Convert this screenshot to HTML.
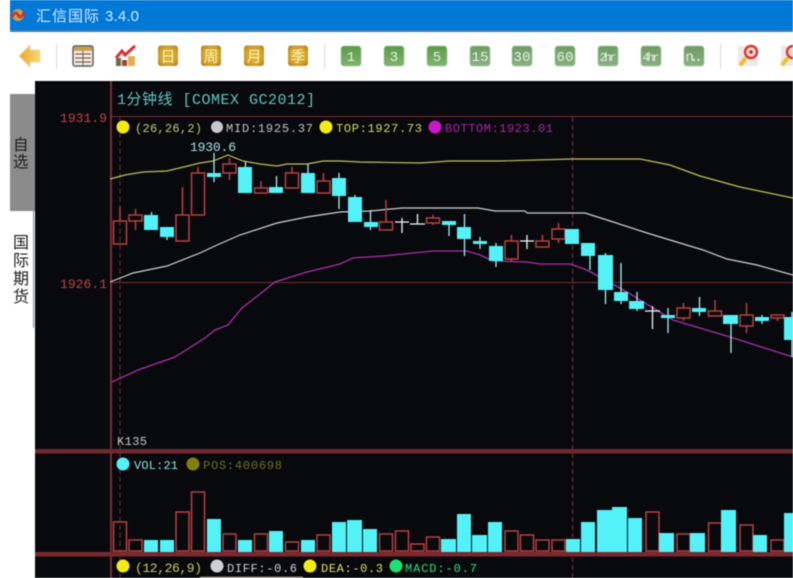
<!DOCTYPE html>
<html>
<head>
<meta charset="utf-8">
<style>
html,body{margin:0;padding:0;width:793px;height:578px;overflow:hidden;background:#fff}
svg{position:absolute;left:0;top:0;filter:blur(.4px)}
text{font-family:"Liberation Mono","Noto Sans CJK SC",monospace;font-size:12px}
.cjk{font-family:"Liberation Sans","Noto Sans CJK SC",sans-serif}
</style>
</head>
<body>
<svg width="793" height="578" viewBox="0 0 793 578" xmlns="http://www.w3.org/2000/svg">
<defs>
<radialGradient id="gold" cx=".5" cy=".5" r=".7"><stop offset="0" stop-color="#e6bc38"/><stop offset=".65" stop-color="#cfa02a"/><stop offset="1" stop-color="#a0741e"/></radialGradient>
<linearGradient id="grn" x1="0" y1="0" x2="0" y2="1"><stop offset="0" stop-color="#5a9a4a"/><stop offset="1" stop-color="#80b470"/></linearGradient>
<linearGradient id="grn2" x1="0" y1="0" x2="0" y2="1"><stop offset="0" stop-color="#6f9c66"/><stop offset="1" stop-color="#8ab084"/></linearGradient>
<linearGradient id="arrow" x1="0" y1="0" x2="1" y2="0"><stop offset="0" stop-color="#e8a828"/><stop offset="1" stop-color="#f6d878"/></linearGradient>
</defs>

<!-- title bar -->
<rect x="10" y="0" width="783" height="31" fill="#0078d7"/>
<rect x="10" y="30" width="783" height="2" fill="#3f7fb2"/>
<circle cx="18" cy="15" r="6" fill="#c9a050"/>
<path d="M12 17 Q15 10 18 15 T24 12" stroke="#c83a30" stroke-width="3" fill="none"/>
<text class="cjk" x="36" y="21" style="font-size:15px" fill="#d6e9f8" textLength="63">汇信国际</text>
<text class="cjk" x="105" y="21" style="font-size:15px;font-family:'Liberation Sans',sans-serif" fill="#d6e9f8" textLength="34">3.4.0</text>

<!-- toolbar -->
<path d="M19 56 L30 45 V50 H40 V62 H30 V67 Z" fill="url(#arrow)" stroke="#ecd8a0" stroke-width="1"/>
<rect x="56" y="44" width="1" height="25" fill="#d8d8d8"/>
<rect x="73" y="46" width="20" height="20" rx="2" fill="#f4f0e4" stroke="#555" stroke-width="1.4"/>
<rect x="74" y="47" width="18" height="4" fill="#c8a050"/>
<path d="M75 54H91M75 58H91M75 62H91" stroke="#8a5a50" stroke-width="1.3"/>
<path d="M83 51V65" stroke="#666" stroke-width="1"/>
<rect x="116" y="58" width="5" height="8" fill="#607048"/>
<rect x="122" y="60" width="5" height="6" fill="#a04030"/>
<rect x="128" y="56" width="7" height="10" fill="#e0b050"/>
<path d="M116 58 L122 51 L125 55 L135 46" stroke="#d83030" stroke-width="3" fill="none"/>

<g fill="url(#gold)">
<rect x="158" y="45.500" width="20" height="20.500" rx="3"/>
<rect x="201" y="45.500" width="20" height="20.500" rx="3"/>
<rect x="244" y="45.500" width="20" height="20.500" rx="3"/>
<rect x="288" y="45.500" width="20" height="20.500" rx="3"/>
</g>
<g fill="#f8eebc" text-anchor="middle">
<text class="cjk" x="168" y="61.500" style="font-size:15px">日</text>
<text class="cjk" x="211" y="61.500" style="font-size:15px">周</text>
<text class="cjk" x="254" y="61.500" style="font-size:15px">月</text>
<text class="cjk" x="298" y="61.500" style="font-size:15px">季</text>
</g>
<rect x="324" y="44" width="1" height="25" fill="#d8d8d8"/>

<g stroke="#a8c8a0" stroke-width=".8">
<rect x="341" y="46" width="20" height="20" rx="3" fill="url(#grn)"/>
<rect x="384" y="46" width="20" height="20" rx="3" fill="url(#grn)"/>
<rect x="427" y="46" width="20" height="20" rx="3" fill="url(#grn)"/>
<rect x="470" y="46" width="20" height="20" rx="3" fill="url(#grn2)"/>
<rect x="512" y="46" width="20" height="20" rx="3" fill="url(#grn2)"/>
<rect x="555" y="46" width="20" height="20" rx="3" fill="url(#grn2)"/>
<rect x="598" y="46" width="20" height="20" rx="3" fill="url(#grn2)"/>
<rect x="641" y="46" width="20" height="20" rx="3" fill="url(#grn2)"/>
<rect x="684" y="46" width="20" height="20" rx="3" fill="url(#grn2)"/>
</g>
<g fill="#e4f2dc" text-anchor="middle">
<text x="351" y="61" style="font-size:14px">1</text>
<text x="394" y="61" style="font-size:14px">3</text>
<text x="437" y="61" style="font-size:14px">5</text>
<text x="480" y="61" style="font-size:14px" textLength="17">15</text>
<text x="522" y="61" style="font-size:14px" textLength="17">30</text>
<text x="565" y="61" style="font-size:14px" textLength="17">60</text>
<text x="608" y="61" style="font-size:12px" textLength="17">2hr</text>
<text x="651" y="61" style="font-size:12px" textLength="17">4hr</text>
<text x="694" y="61" style="font-size:14px" textLength="17">n..</text>
</g>
<rect x="720" y="44" width="1" height="25" fill="#d8d8d8"/>
<rect x="738" y="46" width="20" height="20" fill="#eee8e6"/>
<path d="M741 64 L745 59" stroke="#f0c030" stroke-width="4" stroke-linecap="round"/>
<circle cx="751" cy="52" r="6" fill="#f6d8d0" stroke="#d83838" stroke-width="2.400"/>
<circle cx="751" cy="52" r="1.800" fill="#c82828"/>
<rect x="781" y="46" width="12" height="20" fill="#eee8e6"/>
<path d="M783 64 L787 59" stroke="#f0c030" stroke-width="4" stroke-linecap="round"/>
<circle cx="793" cy="52" r="6" fill="#f6d8d0" stroke="#d83838" stroke-width="2.400"/>

<!-- sidebar -->
<rect x="10" y="94" width="25" height="117" fill="#8b8b8b"/>
<rect x="33" y="211" width="1" height="117" fill="#8a8a8a"/>
<g fill="#1c1c1c">
<text class="cjk" x="13" y="150" style="font-size:15.500px">自</text>
<text class="cjk" x="13" y="167" style="font-size:15.500px">选</text>
<text class="cjk" x="13" y="248" style="font-size:16px">国</text>
<text class="cjk" x="13" y="266" style="font-size:16px">际</text>
<text class="cjk" x="13" y="284" style="font-size:16px">期</text>
<text class="cjk" x="13" y="302" style="font-size:16px">货</text>
</g>

<!-- chart background -->
<rect x="35" y="81" width="758" height="497" fill="#08090c"/>
<rect x="110" y="81" width="2" height="497" fill="#782c32"/>
<rect x="110" y="116" width="683" height="1" fill="#782c32"/>
<rect x="110" y="282" width="683" height="1" fill="#782c32"/>
<rect x="35" y="449" width="758" height="4.500" fill="#6e2a30"/>
<rect x="35" y="552" width="758" height="4.500" fill="#7a2830"/>
<path d="M120 117V578M572.500 117V578" stroke="#7a3038" stroke-width="1" stroke-dasharray="5 3"/>
<rect x="200" y="576.500" width="103" height="1.500" fill="#8a8878"/>

<!-- indicator lines -->
<polyline fill="none" stroke="#c0c058" stroke-width="1.200" points="110,179 125,175 143,172 167,171 200,163 213,161 228,155 243,161 260,164 277,166 287,164 307,164 323,161 340,161 360,162 420,163 450,161 500,161 572,159 640,159 670,165 700,176 740,187 793,198"/>
<polyline fill="none" stroke="#d0d0d0" stroke-width="1.200" points="110,282 133,273 167,266 200,253 217,245 240,235 277,223 307,217 340,212 370,211 402,208 478,208 495,211 525,211 527,213 570,213 585,213 607,220 647,233 703,250 727,259 757,265 793,275"/>
<polyline fill="none" stroke="#a830a8" stroke-width="1.300" points="112,382 138,370 175,357 205,338 215,330 228,325 242,308 265,290 275,282 307,272 340,264 353,258 383,256 433,251 467,251 480,255 493,261 527,262 540,264 570,264 587,270 627,292 673,320 730,337 793,357"/>

<!-- red candles -->
<g fill="none" stroke="#b84040" stroke-width="1.500">
<path d="M113.500 221h13v23h-13zM120 207v14"/>
<path d="M129 215h13v6h-13zM135.500 209v6M135.500 221v9"/>
<path d="M176 215h13v26h-13zM182.500 187v28"/>
<path d="M191.500 173h13v42h-13zM198 167v6"/>
<path d="M223 164h13v9h-13zM229.500 158v6M229.500 173v7"/>
<path d="M254.500 188h13v5h-13zM261 181v7"/>
<path d="M285.500 173h13v15h-13zM292 167v6"/>
<path d="M317 181h13v12h-13zM323.500 173v8"/>
<path d="M379.500 222h13v8h-13zM386 200v22"/>
<path d="M426.500 218h13v5h-13zM433 215v3M433 223v2"/>
<path d="M505 241h13v18h-13zM511.500 235v6M511.500 259v3"/>
<path d="M536 241h13v6h-13zM542.500 235v6"/>
<path d="M552 229h13v10h-13zM558.500 223v6M558.500 239v4"/>
<path d="M677 308h13v10h-13zM683.500 303v5M683.500 318v3"/>
<path d="M708.500 311h13v5h-13zM715 300v11"/>
<path d="M740 315h13v11h-13zM746.500 303v12M746.500 326v7"/>
<path d="M771 315h13v3h-13zM777.500 318v3"/>
</g>

<!-- white doji -->
<g fill="none" stroke="#f4f4f4" stroke-width="1.300">
<path d="M395 222h14M402 218v15"/>
<path d="M410 224h15M417.500 214v10"/>
<path d="M520 241h14M527 235v14"/>
<path d="M645 311h15M652.500 306v23"/>
</g>

<!-- cyan wicks -->
<g fill="none" stroke="#a8f0f0" stroke-width="1.300">
<path d="M151.500 212v5M167 237v3M214 153v29M245.500 162v6M276.500 176v12M308 164v10M339 173v36M355 195v4M370.500 210v20M449 225v11M464.500 214v42M480 237v12M496 243v24M574 229v2M590 256v14M605.500 253v51M621 263v41M637 292v19M668 308v25M699.500 297v19M731 324v29M762 315v9M792 312v45"/>
</g>
<!-- cyan bodies -->
<g fill="#52f2f8">
<rect x="144" y="215" width="14" height="15"/>
<rect x="160" y="227" width="14" height="10"/>
<rect x="207" y="173" width="14" height="4"/>
<rect x="238" y="167" width="14" height="26"/>
<rect x="269" y="187" width="14" height="6"/>
<rect x="301" y="173" width="14" height="20"/>
<rect x="332" y="178" width="14" height="18"/>
<rect x="348" y="197" width="14" height="25"/>
<rect x="364" y="222" width="14" height="5"/>
<rect x="442" y="221" width="14" height="4"/>
<rect x="457" y="227" width="14" height="12"/>
<rect x="473" y="241" width="14" height="3"/>
<rect x="489" y="246" width="14" height="15"/>
<rect x="565" y="229" width="14" height="15"/>
<rect x="581" y="243" width="14" height="13"/>
<rect x="598" y="255" width="15" height="35"/>
<rect x="614" y="292" width="14" height="9"/>
<rect x="629" y="301" width="15" height="8"/>
<rect x="661" y="315" width="14" height="3"/>
<rect x="692" y="308" width="14" height="4"/>
<rect x="723" y="315" width="15" height="9"/>
<rect x="755" y="317" width="14" height="4"/>
<rect x="784" y="317" width="9" height="23"/>
</g>

<!-- volume: red -->
<g fill="none" stroke="#b84040" stroke-width="1.500">
<path d="M113.500 522h13v29h-13z"/>
<path d="M129 540h13v11h-13z"/>
<path d="M176 512h13v39h-13z"/>
<path d="M191.500 492h13v59h-13z"/>
<path d="M223 534h13v17h-13z"/>
<path d="M254.500 534h13v17h-13z"/>
<path d="M285.500 542h13v9h-13z"/>
<path d="M317 535h13v16h-13z"/>
<path d="M379.500 534h13v17h-13z"/>
<path d="M395.500 531h13v20h-13z"/>
<path d="M411 544h13v7h-13z"/>
<path d="M426.500 537h13v14h-13z"/>
<path d="M505 531h13v20h-13z"/>
<path d="M520.500 535h13v16h-13z"/>
<path d="M536 540h13v11h-13z"/>
<path d="M552 540h13v11h-13z"/>
<path d="M646 512h13v39h-13z"/>
<path d="M677 534h13v17h-13z"/>
<path d="M708.500 523h13v28h-13z"/>
<path d="M740 525h13v26h-13z"/>
<path d="M771 540h13v11h-13z"/>
</g>
<!-- volume: cyan -->
<g fill="#52f2f8">
<rect x="144" y="540" width="14" height="12"/>
<rect x="160" y="540" width="14" height="12"/>
<rect x="207" y="519" width="14" height="33"/>
<rect x="238" y="540" width="14" height="12"/>
<rect x="269" y="531" width="14" height="21"/>
<rect x="301" y="540" width="14" height="12"/>
<rect x="332" y="522" width="14" height="30"/>
<rect x="347" y="520" width="15" height="32"/>
<rect x="363" y="529" width="14" height="23"/>
<rect x="441" y="539" width="15" height="13"/>
<rect x="457" y="514" width="14" height="38"/>
<rect x="472" y="535" width="15" height="17"/>
<rect x="488" y="522" width="14" height="30"/>
<rect x="566" y="539" width="14" height="13"/>
<rect x="581" y="522" width="14" height="30"/>
<rect x="597" y="510" width="15" height="42"/>
<rect x="612" y="507" width="15" height="45"/>
<rect x="628" y="518" width="14" height="34"/>
<rect x="659" y="533" width="15" height="19"/>
<rect x="690" y="533" width="15" height="19"/>
<rect x="721" y="510" width="15" height="42"/>
<rect x="753" y="535" width="14" height="17"/>
<rect x="784" y="513" width="9" height="39"/>
</g>

<!-- labels -->
<text x="60" y="122" fill="#c04448" style="font-size:13px" textLength="47">1931.9</text>
<text x="60" y="288" fill="#c04448" style="font-size:13px" textLength="47">1926.1</text>
<text x="117" y="104" fill="#62c4c4" style="font-size:15px" textLength="198">1分钟线 [COMEX GC2012]</text>
<text x="190" y="151" fill="#a8e4e8" style="font-size:13px" textLength="46">1930.6</text>
<text x="117" y="445" fill="#c8ccc8" textLength="30">K135</text>

<circle cx="123" cy="127" r="6.500" fill="#f4ec10"/>
<text x="135" y="132" fill="#c8c870" textLength="67">(26,26,2)</text>
<circle cx="217" cy="127" r="6" fill="#c8c8cc"/>
<text x="226" y="132" fill="#c4c4c4" textLength="87">MID:1925.37</text>
<circle cx="326" cy="127" r="6.500" fill="#f4ec10"/>
<text x="336" y="132" fill="#d8d860" textLength="86">TOP:1927.73</text>
<circle cx="435" cy="127" r="6.500" fill="#c818c8"/>
<text x="445" y="132" fill="#a828a8" textLength="108">BOTTOM:1923.01</text>

<circle cx="123" cy="464" r="6.500" fill="#52f2f8"/>
<text x="134" y="469" fill="#90e0e4" textLength="44">VOL:21</text>
<circle cx="193" cy="464" r="6.500" fill="#80800c"/>
<text x="203" y="469" fill="#70701c" textLength="79">POS:400698</text>

<circle cx="123" cy="566" r="6.500" fill="#f4ec10"/>
<text x="135" y="572" fill="#c8c870" style="font-size:13px" textLength="67">(12,26,9)</text>
<circle cx="217" cy="566" r="6.500" fill="#d0d0d4"/>
<text x="227" y="572" fill="#d0d0d0" textLength="70">DIFF:-0.6</text>
<circle cx="310" cy="566" r="6.500" fill="#f4ec10"/>
<text x="321" y="572" fill="#e0e070" textLength="62">DEA:-0.3</text>
<circle cx="396" cy="566" r="6.500" fill="#20e070"/>
<text x="405" y="572" fill="#30e080" textLength="72">MACD:-0.7</text>
</svg>
</body>
</html>
